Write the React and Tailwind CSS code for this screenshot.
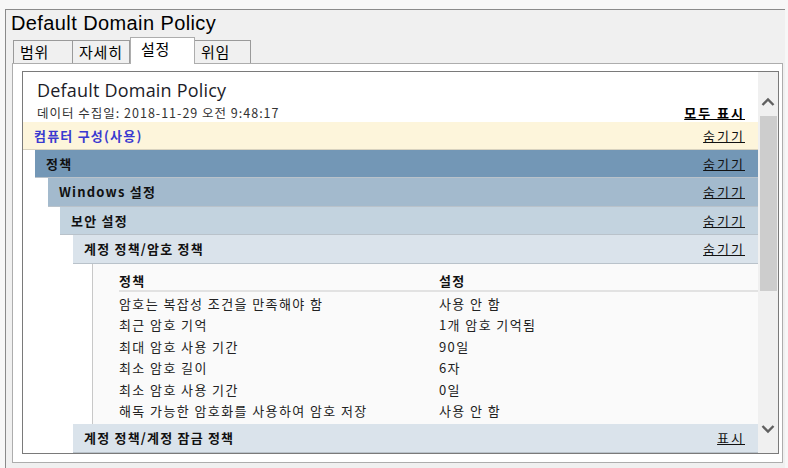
import React from 'react'

const KR = { fontFamily: '"Noto Sans CJK KR", "Noto Sans", sans-serif' }

const tabs = [
  { label: '범위', w: 'w-[60px]' },
  { label: '자세히', w: 'w-[58px]' },
  { label: '설정', w: 'w-[65px]', active: true },
  { label: '위임', w: 'w-[57px]' },
]

const sections = [
  { label: '정책', indent: 'ml-[12px]', bg: 'bg-[#7397b6]' },
  { label: 'Windows 설정', indent: 'ml-[25px]', bg: 'bg-[#a3bacd]' },
  { label: '보안 설정', indent: 'ml-[37px]', bg: 'bg-[#c3d3df]' },
  { label: '계정 정책/암호 정책', indent: 'ml-[50px]', bg: 'bg-[#dae3eb]' },
]

const policies = [
  ['암호는 복잡성 조건을 만족해야 함', '사용 안 함'],
  ['최근 암호 기억', '1개 암호 기억됨'],
  ['최대 암호 사용 기간', '90일'],
  ['최소 암호 길이', '6자'],
  ['최소 암호 사용 기간', '0일'],
  ['해독 가능한 암호화를 사용하여 암호 저장', '사용 안 함'],
]

function SectionRow({ label, indent, bg, link = '숨기기' }) {
  return (
    <div className={`${indent} ${bg} h-[29px] flex items-center justify-between pl-[11px] pr-[13px] border-b border-[#b9c2ca]`}>
      <span className="text-[13px] tracking-[1.2px] font-bold text-[#111] whitespace-nowrap">{label}</span>
      <span className="text-[13px] tracking-[2px] underline text-[#111] whitespace-nowrap">{link}</span>
    </div>
  )
}

function Chevron({ up }) {
  return (
    <svg width="14" height="10" viewBox="0 0 14 10">
      <path
        d={up ? 'M1.5 8 L7 2.5 L12.5 8' : 'M1.5 2 L7 7.5 L12.5 2'}
        fill="none"
        stroke="#606060"
        strokeWidth="2.4"
      />
    </svg>
  )
}

export default function App() {
  return (
    <div className="w-[788px] h-[468px] bg-[#f7f7f7] pt-[9px] pl-[5px] pr-[3px] overflow-hidden" style={KR}>
      <div className="h-[459px] border-t border-l border-[#8a8a8a] bg-[#f0f0f0] flex flex-col">
        {/* window title */}
        <div
          className="h-[28px] pl-[5px] pt-[2px] text-[20px] tracking-[0.4px] leading-[23px] text-black"
          style={{ fontFamily: '"Liberation Sans", "Noto Sans CJK KR", sans-serif' }}
        >
          Default Domain Policy
        </div>

        {/* tabs */}
        <div className="h-[25px] pl-[7px] flex items-end">
          {tabs.map((t) =>
            t.active ? (
              <div
                key={t.label}
                className={`${t.w} h-[27px] -mb-[1px] relative z-10 bg-white border border-b-0 border-[#adadad] px-[10px] pt-[1px] text-[15px] tracking-[0.8px] leading-[20px] text-black whitespace-nowrap`}
              >
                {t.label}
              </div>
            ) : (
              <div
                key={t.label}
                className={`${t.w} h-[23px] bg-[#f0f0f0] border border-b-0 border-[#9a9a9a] -ml-[1px] first:ml-0 px-[6px] text-[15px] tracking-[0.8px] leading-[22px] text-black whitespace-nowrap overflow-hidden`}
              >
                {t.label}
              </div>
            )
          )}
        </div>

        {/* tab panel */}
        <div className="ml-[6px] mr-[2px] h-[400px] bg-white border border-[#adadad] pt-[7px] pl-[9px] pr-[3px]">
          <div className="h-[383px] border border-[#7a7a7a] flex">
            {/* content */}
            <div className="flex-1 flex flex-col bg-white">
              <div className="px-[14px] pt-[7px]">
                <div
                  className="text-[18px] tracking-[0.2px] leading-[23px] text-[#1c1c28]"
                  style={{ fontFamily: '"Open Sans", "Noto Sans CJK KR", sans-serif' }}
                >
                  Default Domain Policy
                </div>
                <div className="flex justify-between items-end h-[20px] pb-[1px]">
                  <span className="text-[12.5px] tracking-[1px] leading-[16px] text-[#333] whitespace-nowrap">데이터 수집일: 2018-11-29 오전 9:48:17</span>
                  <span className="text-[13px] tracking-[2px] -mr-[1px] leading-[16px] font-bold underline text-black whitespace-nowrap">모두 표시</span>
                </div>
              </div>

              <div className="h-[28px] bg-[#fdf5db] border-b border-[#d8d2bf] flex items-center justify-between pl-[11px] pr-[13px]">
                <span className="text-[13px] tracking-[1.2px] font-bold text-[#3a3ad0]">컴퓨터 구성(사용)</span>
                <span className="text-[13px] tracking-[2px] underline text-[#111]">숨기기</span>
              </div>

              {sections.map((s) => (
                <SectionRow key={s.label} {...s} />
              ))}

              {/* policy table */}
              <div className="ml-[69px] h-[163px] bg-[#fafafa] border-l border-[#c8c8c8] pl-[26px] pt-[8px]">
                <div className="flex h-[20px] items-center border-b-2 border-[#e2e2e2] text-[13px] tracking-[1.2px] font-bold text-[#111]">
                  <span className="w-[320px]">정책</span>
                  <span>설정</span>
                </div>
                <div className="pt-[1px]">
                  {policies.map(([k, v]) => (
                    <div key={k} className="flex h-[21.5px] items-center text-[13px] tracking-[1.4px] text-[#222] whitespace-nowrap">
                      <span className="w-[320px]">{k}</span>
                      <span>{v}</span>
                    </div>
                  ))}
                </div>
              </div>

              <SectionRow label="계정 정책/계정 잠금 정책" indent="ml-[50px]" bg="bg-[#dae3eb]" link="표시" />
            </div>

            {/* scrollbar */}
            <div className="w-[20px] bg-[#f0f0f0] flex flex-col items-center">
              <div className="h-[44px] flex items-end justify-center pb-[9px]">
                <Chevron up />
              </div>
              <div className="w-[17px] h-[175px] bg-[#cdcdcd]" />
              <div className="flex-1" />
              <div className="h-[38px] flex items-start justify-center pt-[9px]">
                <Chevron />
              </div>
            </div>
          </div>
        </div>
      </div>
    </div>
  )
}
